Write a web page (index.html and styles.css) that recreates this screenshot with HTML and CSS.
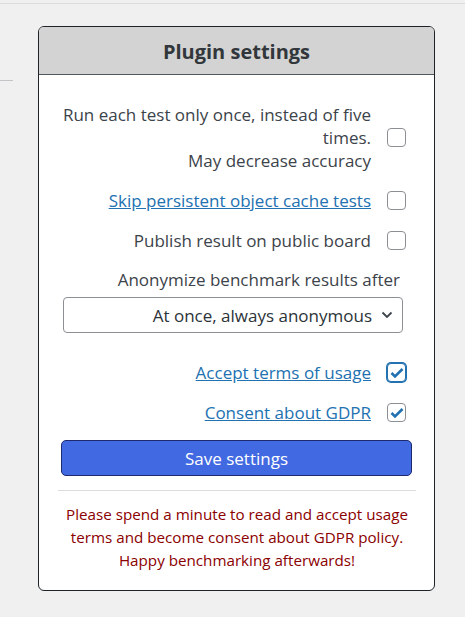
FILE: index.html
```html
<!DOCTYPE html>
<html>
<head>
<meta charset="utf-8">
<link rel="stylesheet" href="styles.css">
</head>
<body>
<div class="topline"></div>
<div class="page">
  <div class="stub"></div>
  <div class="card">
    <div class="card-head">Plugin settings</div>
    <div class="card-body">
      <div class="row">
        <label class="lbl">Run each test only once, instead of five<br>times.<br>May decrease accuracy</label>
        <span class="cb"></span>
      </div>
      <div class="row">
        <a class="lbl link" href="#">Skip persistent object cache tests</a>
        <span class="cb"></span>
      </div>
      <div class="row">
        <label class="lbl">Publish result on public board</label>
        <span class="cb"></span>
      </div>
      <div class="sel-label">Anonymize benchmark results after</div>
      <div class="select">
        <span>At once, always anonymous</span>
        <svg class="chev" width="12" height="8" viewBox="0 0 12 8"><path d="M1.5 1.5 L6 6 L10.5 1.5" fill="none" stroke="#3c434a" stroke-width="1.8"/></svg>
      </div>
      <div class="row">
        <a class="lbl link" href="#">Accept terms of usage</a>
        <span class="cb checked focus"><svg width="14" height="12" viewBox="0 0 14 12"><path d="M1.5 6 L5 9.5 L12.5 2" fill="none" stroke="#2271b1" stroke-width="2.6"/></svg></span>
      </div>
      <div class="row">
        <a class="lbl link" href="#">Consent about GDPR</a>
        <span class="cb checked"><svg width="14" height="12" viewBox="0 0 14 12"><path d="M1.5 6 L5 9.5 L12.5 2" fill="none" stroke="#2271b1" stroke-width="2.6"/></svg></span>
      </div>
      <button class="save">Save settings</button>
      <div class="sep"></div>
      <p class="note">Please spend a minute to read and accept usage terms and become consent about GDPR policy. Happy benchmarking afterwards!</p>
    </div>
  </div>
</div>
</body>
</html>
```
FILE: styles.css
```css
html, body {
  margin: 0;
  padding: 0;
  background: #f0f0f1;
  font-family: "Open Sans", "Noto Sans", sans-serif;
  color: #3c434a;
}
.topline {
  height: 3px;
  border-bottom: 1px solid #dcdcde;
}
.page {
  display: flex;
  align-items: flex-start;
}
.stub {
  width: 13px;
  margin-top: 76px;
  border-top: 1px solid #c3c4c7;
}
.card {
  margin-left: 25px;
  margin-top: 22px;
  width: 395px;
  border: 1px solid #1d2327;
  border-radius: 6px;
  background: #fff;
  overflow: hidden;
}
.card-head {
  background: #d3d3d3;
  border-bottom: 1px solid #50575e;
  height: 47px;
  line-height: 49px;
  text-align: center;
  font-weight: 700;
  font-size: 20px;
  color: #32373c;
}
.card-body {
  padding: 28px 22px 18px 19px;
}
.row {
  display: flex;
  justify-content: flex-end;
  align-items: center;
  margin: 0 6px 17px 0;
}
.lbl {
  text-align: right;
  font-size: 17px;
  line-height: 23px;
  color: #3c434a;
  margin-right: 16px;
}
.link {
  color: #2271b1;
  text-decoration: underline;
}
.cb {
  width: 17px;
  height: 17px;
  border: 1px solid #8c8f94;
  border-radius: 4px;
  background: #fff;
  display: flex;
  align-items: center;
  justify-content: center;
  flex: none;
}
.cb.focus {
  border-color: #2271b1;
  box-shadow: 0 0 0 1px #2271b1;
}
.sel-label {
  text-align: right;
  font-size: 17px;
  line-height: 23px;
  margin: -1px 12px 6px 0;
}
.select {
  margin: 0 9px 28px 5px;
  height: 34px;
  border: 1px solid #8c8f94;
  border-radius: 4px;
  display: flex;
  justify-content: flex-end;
  align-items: center;
  padding-right: 9px;
  font-size: 17px;
  color: #2c3338;
}
.select span { margin-right: 9px; }
.save {
  display: block;
  width: 351px;
  height: 36px;
  margin: -1px 0 0 3px;
  background: #4169e1;
  color: #fff;
  border: 1px solid #1d2b6e;
  border-radius: 5px;
  font-family: inherit;
  font-size: 17px;
}
.sep {
  margin: 14px -4px 0 0;
  border-top: 1px solid #dcdcde;
}
.note {
  margin: 12px -4px 0 0;
  text-align: center;
  color: #8b0000;
  font-size: 15.2px;
  line-height: 23px;
}
```
